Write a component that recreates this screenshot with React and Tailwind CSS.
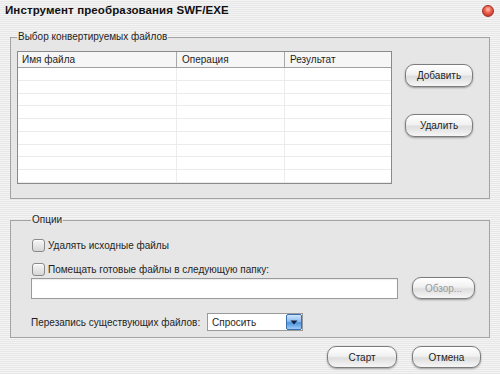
const stripes =
  "bg-[repeating-linear-gradient(180deg,#f4f4f4_0px,#f4f4f4_1px,#e7e7e7_1px,#e7e7e7_2px)]";
const btn =
  "flex items-center justify-center h-[22px] rounded-[9px] border border-[#7c7c7c] bg-[linear-gradient(180deg,#ffffff_0%,#f1f1f1_45%,#dedede_55%,#f6f6f6_100%)] shadow-[0_1px_2px_rgba(0,0,0,0.35)] text-[10px] text-[#1e1e1e]";

function AquaButton({ children, className = "", disabled = false }) {
  return (
    <div className={`${btn} ${className} ${disabled ? "text-[#9a9a9a]" : ""}`}>
      {children}
    </div>
  );
}

function Checkbox({ label }) {
  return (
    <div className="flex items-center h-[13px]">
      <div className="w-[13px] h-[13px] rounded-[3px] border border-[#8a8a8a] bg-[linear-gradient(180deg,#f7f7f7,#d6d6d6)] shadow-[inset_0_1px_0_#ffffff]" />
      <span className="ml-[3px] text-[10px] text-[#1e1e1e] whitespace-nowrap">{label}</span>
    </div>
  );
}

const rows = Array.from({ length: 9 });

export default function App() {
  return (
    <div
      className={`w-[500px] h-[374px] overflow-hidden flex flex-col ${stripes} font-['Liberation_Sans',Arial,sans-serif]`}
    >
      {/* Title bar */}
      <div className="h-[22px] flex items-center justify-between pl-[5px] pr-[6px]">
        <span className="text-[11.5px] font-bold text-[#111] tracking-[0.1px]">
          Инструмент преобразования SWF/EXE
        </span>
        <div className="w-[12px] h-[12px] rounded-full border border-[#9a3028] bg-[radial-gradient(circle_at_50%_35%,#ffc2b4_0%,#ec5a48_45%,#b8261d_100%)]" />
      </div>

      {/* Files group */}
      <fieldset className="mt-[8px] ml-[10px] w-[480px] border border-[#a3a3a3] bg-[#e6e6e6] pt-[7px] pb-[14px] pl-[6px] flex">
        <legend className="px-[1px] text-[10px] leading-[14px] text-[#1e1e1e]">
          Выбор конвертируемых файлов
        </legend>
        <div className="flex">
          <div className="w-[375px] h-[133px] border border-[#8a8a8a] bg-white flex flex-col">
            <div className="h-[16px] flex border-b border-[#a0a0a0] bg-[#f6f6f6] text-[10px] text-[#1e1e1e]">
              <div className="w-[159px] pl-[4px] leading-[15px] border-r border-[#a8a8a8]">Имя файла</div>
              <div className="w-[108px] pl-[5px] leading-[15px] border-r border-[#a8a8a8]">Операция</div>
              <div className="flex-1 pl-[5px] leading-[15px]">Результат</div>
            </div>
            {rows.map((_, i) => (
              <div key={i} className="h-[13px] flex border-b border-[#ebebeb]">
                <div className="w-[159px] border-r border-[#ececec]" />
                <div className="w-[108px] border-r border-[#ececec]" />
                <div className="flex-1" />
              </div>
            ))}
          </div>
          <div className="ml-[13px] flex flex-col">
            <AquaButton className="mt-[13px] w-[68px] h-[23px]">Добавить</AquaButton>
            <AquaButton className="mt-[27px] w-[68px] h-[23px]">Удалить</AquaButton>
          </div>
        </div>
      </fieldset>

      {/* Options group */}
      <fieldset className="mt-[14px] ml-[10px] w-[480px] border border-[#a3a3a3] bg-[#e6e6e6] pt-[12px] pb-[6px] pl-[20px]">
        <legend className="px-[1px] text-[10px] leading-[14px] text-[#1e1e1e]">
          Опции
        </legend>
        <div className="pl-[1px]">
          <Checkbox label="Удалять исходные файлы" />
        </div>
        <div className="pl-[1px] mt-[11px]">
          <Checkbox label="Помещать готовые файлы в следующую папку:" />
        </div>
        <div className="mt-[1px] flex items-center">
          <div className="w-[367px] h-[21px] border border-[#9a9a9a] bg-white shadow-[inset_0_1px_1px_rgba(0,0,0,0.08)]" />
          <AquaButton className="ml-[14px] w-[63px]" disabled>
            Обзор...
          </AquaButton>
        </div>
        <div className="mt-[14px] flex items-center">
          <span className="w-[176px] shrink-0 whitespace-nowrap text-[10px] text-[#1e1e1e]">
            Перезапись существующих файлов:
          </span>
          <div className="w-[96px] h-[18px] flex items-center border border-[#9a9a9a] bg-white">
            <span className="flex-1 pl-[4px] text-[10px] text-[#1e1e1e]">Спросить</span>
            <div className="w-[16px] h-[16px] rounded-[2px] border border-[#3a6fb0] bg-[linear-gradient(180deg,#cfe4fb_0%,#8dbdf0_45%,#4d94e0_55%,#9cc8f4_100%)] flex items-center justify-center">
              <svg width="8" height="5" viewBox="0 0 8 5">
                <path d="M0.5 0.5 L7.5 0.5 L4 4.5 Z" fill="#14233d" />
              </svg>
            </div>
          </div>
        </div>
      </fieldset>

      {/* Bottom buttons */}
      <div className="mt-[8px] flex justify-end pr-[19px]">
        <AquaButton className="w-[70px]">Старт</AquaButton>
        <AquaButton className="ml-[15px] w-[69px]">Отмена</AquaButton>
      </div>
    </div>
  );
}
